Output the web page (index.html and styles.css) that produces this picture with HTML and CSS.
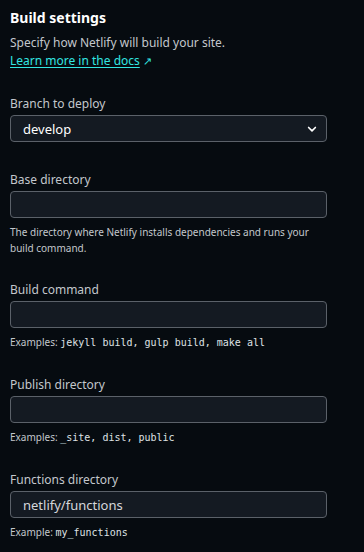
FILE: index.html
```html
<!DOCTYPE html>
<html lang="en">
<head>
  <meta charset="UTF-8" />
  <title>Build settings</title>
  <meta name="viewport" content="width=device-width, initial-scale=1" />
  <link rel="stylesheet" href="styles.css">
</head>
<body>

  <!-- Intro -->
  <div class="intro">
    <h2 class="title">Build settings</h2>
    <p class="lead">
      Specify how Netlify will build your site.<br>
      <a href="#" class="docs-link">Learn more in the docs</a> <span class="arrow">&#8599;</span>
    </p>
  </div>

  <!-- Fields -->
  <form class="settings">
    <div class="field field-branch">
      <label class="label">Branch to deploy</label>
      <div class="select">
        <span>develop</span>
        <svg viewBox="0 0 16 16" width="12" height="12"><path d="M3.5 6l4.5 4.5L12.5 6" fill="none" stroke="#fff" stroke-width="2.2" stroke-linecap="round" stroke-linejoin="round"/></svg>
      </div>
    </div>

    <div class="field">
      <label class="label">Base directory</label>
      <div class="input"></div>
      <p class="help">The directory where Netlify installs dependencies and runs your build command.</p>
    </div>

    <div class="field">
      <label class="label">Build command</label>
      <div class="input"></div>
      <p class="help">Examples: <code>jekyll build, gulp build, make all</code></p>
    </div>

    <div class="field">
      <label class="label">Publish directory</label>
      <div class="input"></div>
      <p class="help">Examples: <code>_site, dist, public</code></p>
    </div>

    <div class="field">
      <label class="label">Functions directory</label>
      <div class="input">netlify/functions</div>
      <p class="help">Example: <code>my_functions</code></p>
    </div>
  </form>

</body>
</html>
```

FILE: styles.css
```css
html, body {
  margin: 0;
  padding: 0;
  background: #060b10;
  color: #fff;
  font-family: 'Noto Sans', sans-serif;
}

body {
  padding: 8px 37px 0 10px;
}

.title {
  margin: 0;
  font-size: 14px;
  line-height: 20px;
  font-weight: 700;
}

.lead {
  margin: 6px 0 0;
  font-size: 12px;
  line-height: 18px;
  color: #c3c7cc;
}

.docs-link {
  color: #32e6e2;
  text-decoration: underline;
  text-underline-offset: 2px;
}

.arrow {
  color: #32e6e2;
  font-size: 11px;
}

.settings {
  margin-top: 25px;
}

.field {
  margin-bottom: 25px;
}

.field-branch {
  margin-bottom: 29px;
}

.label {
  display: block;
  font-size: 12px;
  line-height: 18px;
  color: #c3c7cc;
  margin-bottom: 2px;
}

.select,
.input {
  box-sizing: border-box;
  height: 27px;
  border: 1px solid #5b6169;
  border-radius: 4px;
  background: #141a22;
  display: flex;
  align-items: center;
  padding: 0 12px;
  font-size: 13px;
  color: #fff;
}

.select {
  justify-content: space-between;
  padding-right: 8px;
}

.input {
  color: #d4d7db;
}

.help {
  margin: 6px 0 0;
  font-size: 10px;
  line-height: 16px;
  color: #c3c7cc;
}

code {
  font-family: 'DejaVu Sans Mono', monospace;
  font-size: 10px;
  color: #dfe2e5;
  white-space: pre;
}
```
